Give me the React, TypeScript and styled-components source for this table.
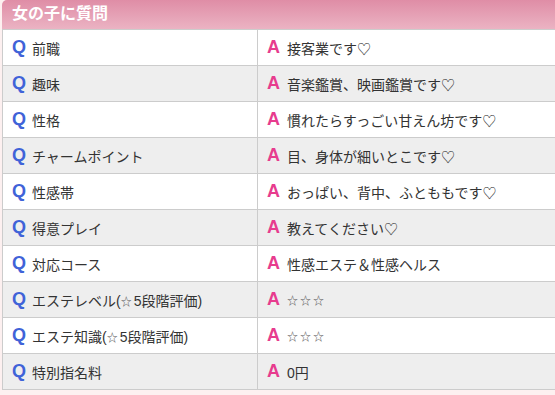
import { Fragment } from "react";
import styled, { createGlobalStyle } from "styled-components";

const GlobalStyle = createGlobalStyle`
  html, body {
    margin: 0;
    padding: 0;
    background: #fdf0f0;
    overflow: hidden;
    font-family: "Liberation Sans", "Noto Sans CJK JP", sans-serif;
  }
`;

const Section = styled.section`
  margin-left: 2px;
  width: 553px;
`;

const Title = styled.h2`
  margin: 0;
  height: 29px;
  line-height: 27px;
  padding-left: 10px;
  border-radius: 5px 0 0 0;
  background: linear-gradient(#df8da6, #ebb3c3);
  color: #fff;
  font-size: 16px;
  font-weight: bold;
`;

const Table = styled.div`
  display: grid;
  grid-template-columns: 255px 1fr;
  border-top: 1px solid #cccccc;
  border-left: 1px solid #cccccc;
`;

const Cell = styled.div<{ $odd: boolean; $last?: boolean }>`
  display: flex;
  align-items: center;
  gap: 6px;
  height: 35px;
  padding-left: 9px;
  background: ${(p) => (p.$odd ? "#eeeeee" : "#ffffff")};
  border-right: ${(p) => (p.$last ? "none" : "1px solid #cccccc")};
  border-bottom: 1px solid #cccccc;
  color: #333;
  font-size: 14px;
  white-space: nowrap;
`;

const Mark = styled.span<{ $color: string }>`
  color: ${(p) => p.$color};
  font-size: 18px;
  font-weight: bold;
  width: 14px;
`;

const Star = styled.span`
  font-size: 11px;
  letter-spacing: 2px;
  color: #555;
`;

const withStars = (text: string) =>
  text.split(/(☆+)/).map((part, i) =>
    part.startsWith("☆") ? <Star key={i}>{part}</Star> : part
  );

const rows: [string, string][] = [
  ["前職", "接客業です♡"],
  ["趣味", "音楽鑑賞、映画鑑賞です♡"],
  ["性格", "慣れたらすっごい甘えん坊です♡"],
  ["チャームポイント", "目、身体が細いとこです♡"],
  ["性感帯", "おっぱい、背中、ふとももです♡"],
  ["得意プレイ", "教えてください♡"],
  ["対応コース", "性感エステ＆性感ヘルス"],
  ["エステレベル(☆5段階評価)", "☆☆☆"],
  ["エステ知識(☆5段階評価)", "☆☆☆"],
  ["特別指名料", "0円"],
];

const App = () => (
  <>
    <GlobalStyle />
    <Section>
      <Title>女の子に質問</Title>
      <Table>
        {rows.map(([q, a], i) => (
          <Fragment key={i}>
            <Cell $odd={i % 2 === 1}>
              <Mark $color="#3f63d8">Q</Mark>
              <span>{withStars(q)}</span>
            </Cell>
            <Cell $odd={i % 2 === 1} $last>
              <Mark $color="#e73c8e">A</Mark>
              <span>{withStars(a)}</span>
            </Cell>
          </Fragment>
        ))}
      </Table>
    </Section>
  </>
);

export default App;
